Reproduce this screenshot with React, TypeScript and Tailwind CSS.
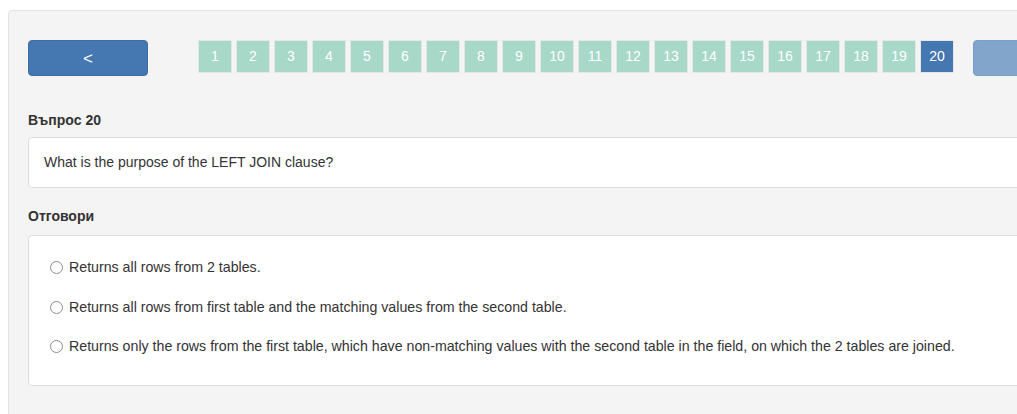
import { useState } from "react";

const answers = [
  "Returns all rows from 2 tables.",
  "Returns all rows from first table and the matching values from the second table.",
  "Returns only the rows from the first table, which have non-matching values with the second table in the field, on which the 2 tables are joined.",
];

export default function App() {
  const [current, setCurrent] = useState(20);
  const [picked, setPicked] = useState<number | null>(null);
  const pages = Array.from({ length: 20 }, (_, i) => i + 1);

  return (
    <div
      className="w-[1017px] h-[414px] overflow-hidden bg-white text-[14px] text-[#333]"
      style={{ fontFamily: '"Liberation Sans", Arial, sans-serif' }}
    >
      <div className="ml-2 mt-[10px] w-[1100px] h-[500px] rounded border border-[#e3e3e3] bg-[#f4f4f4] pl-[19px] pt-[29px]">
        {/* Navigation */}
        <div className="flex items-start">
          <button
            onClick={() => setCurrent((c) => Math.max(1, c - 1))}
            className="w-[120px] h-9 rounded border border-[#3e6ea6] bg-[#4577b0] text-white text-[17px] leading-none"
          >
            &lt;
          </button>
          <div className="ml-[50px] flex gap-1">
            {pages.map((p) => (
              <button
                key={p}
                onClick={() => setCurrent(p)}
                className={
                  p === current
                    ? "w-[34px] h-[33px] border border-[#e6e6e6] bg-[#4577b0] text-white text-[14px]"
                    : "w-[34px] h-[33px] border border-[#e6e6e6] bg-[#a8d8c8] text-white text-[14px]"
                }
              >
                {p}
              </button>
            ))}
          </div>
          <button
            onClick={() => setCurrent((c) => Math.min(20, c + 1))}
            className="ml-[19px] w-[120px] h-9 rounded border border-[#7a9fc6] bg-[#81a5cb] text-white"
          ></button>
        </div>

        {/* Question */}
        <div className="mt-[35px] font-bold leading-[18px]">Въпрос {current}</div>
        <div className="mt-2 h-[51px] flex items-center rounded border border-[#dddddd] bg-white px-[15px]">
          What is the purpose of the LEFT JOIN clause?
        </div>

        {/* Answers */}
        <div className="mt-[19px] font-bold leading-[18px]">Отговори</div>
        <div className="mt-[10px] h-[151px] rounded border border-[#dddddd] bg-white pl-[21px] pt-[12px] text-[14.2px]">
          {answers.map((a, i) => (
            <label
              key={i}
              onClick={() => setPicked(i)}
              className="flex h-[39.5px] items-center gap-[6px] cursor-pointer"
            >
              <span className="flex w-[13px] h-[13px] items-center justify-center rounded-full border border-[#8d8d8d] bg-white">
                {picked === i ? (
                  <span className="w-[7px] h-[7px] rounded-full bg-[#3478f6]" />
                ) : null}
              </span>
              <span>{a}</span>
            </label>
          ))}
        </div>
      </div>
    </div>
  );
}
